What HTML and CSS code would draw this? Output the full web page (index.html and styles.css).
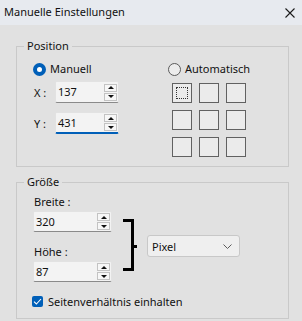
FILE: index.html
```html
<!DOCTYPE html>
<html lang="de">
  <head>
    <meta charset="UTF-8" />
    <meta name="viewport" content="width=device-width, initial-scale=1.0" />
    <title>Manuelle Einstellungen</title>
    <link rel="stylesheet" href="styles.css">
  </head>
  <body>
    <div class="titlebar">
      <span class="title">Manuelle Einstellungen</span>
      <svg class="close" width="10" height="10" viewBox="0 0 10 10">
        <path d="M0.5 0.5 L9.5 9.5 M9.5 0.5 L0.5 9.5" stroke="#1b1b1b" stroke-width="1.1" fill="none" />
      </svg>
    </div>

    <div class="content">
      <fieldset class="group">
        <legend>Position</legend>
        <div class="group-body position">
          <div class="pos-manual">
            <label class="radio"><span class="radio-dot checked"></span>Manuell</label>
            <div class="coord">
              <span class="coord-label">X :</span>
              <div class="spin">
                <span class="spin-value">137</span>
                <span class="spin-buttons">
                  <span class="spin-btn up"></span>
                  <span class="spin-btn down"></span>
                </span>
              </div>
            </div>
            <div class="coord coord-y">
              <span class="coord-label">Y :</span>
              <div class="spin focused">
                <span class="spin-value">431</span>
                <span class="spin-buttons">
                  <span class="spin-btn up"></span>
                  <span class="spin-btn down"></span>
                </span>
              </div>
            </div>
          </div>

          <div class="pos-auto">
            <label class="radio"><span class="radio-dot"></span>Automatisch</label>
            <div class="anchor-grid">
              <span class="anchor selected"></span>
              <span class="anchor"></span>
              <span class="anchor"></span>
              <span class="anchor"></span>
              <span class="anchor"></span>
              <span class="anchor"></span>
              <span class="anchor"></span>
              <span class="anchor"></span>
              <span class="anchor"></span>
            </div>
          </div>
        </div>
      </fieldset>

      <fieldset class="group group-size">
        <legend>Größe</legend>
        <div class="group-body">
          <div class="size-row">
            <div class="size-fields">
              <div class="field-label">Breite :</div>
              <div class="spin spin-size">
                <span class="spin-value">320</span>
                <span class="spin-buttons">
                  <span class="spin-btn up"></span>
                  <span class="spin-btn down"></span>
                </span>
              </div>
              <div class="field-label label-height">Höhe :</div>
              <div class="spin spin-size">
                <span class="spin-value">87</span>
                <span class="spin-buttons">
                  <span class="spin-btn up"></span>
                  <span class="spin-btn down"></span>
                </span>
              </div>
            </div>

            <svg class="bracket" width="16" height="54" viewBox="0 0 16 54">
              <path d="M1 2.5 H10.5 V51.5 H1 M10.5 28.5 H15" stroke="#000" stroke-width="3" fill="none" />
            </svg>

            <div class="select">
              <span>Pixel</span>
              <svg width="9" height="5" viewBox="0 0 9 5">
                <path d="M0.5 0.5 L4.5 4.5 L8.5 0.5" stroke="#5c5c5c" stroke-width="1" fill="none" />
              </svg>
            </div>
          </div>

          <label class="checkbox">
            <span class="check-box">
              <svg width="9" height="7" viewBox="0 0 9 7">
                <path d="M1 3.6 L3.4 6 L8 1" stroke="#fff" stroke-width="1.1" fill="none" />
              </svg>
            </span>
            Seitenverhältnis einhalten
          </label>
        </div>
      </fieldset>
    </div>
  </body>
</html>
```

FILE: styles.css
```css
body {
  margin: 0;
  width: 302px;
  height: 321px;
  overflow: hidden;
  background: #e1e1e1;
  font-family: "Noto Sans", "Open Sans", sans-serif;
  font-size: 11px;
  color: #111;
}
.titlebar {
  height: 25px;
  background: #e7eaef;
  display: flex;
  align-items: center;
  justify-content: space-between;
  padding: 0 7px 0 4px;
}
.title {
  font-size: 11px;
  line-height: 16px;
  margin-top: -1px;
}
.close {
  display: block;
  margin-top: 1px;
}
.content {
  padding: 13px 13px 0 16px;
}
.group {
  margin: 0;
  padding: 0;
  border: 1px solid #c9c9c9;
  min-width: 0;
}
.group legend {
  margin-left: 7px;
  padding: 0 3px;
  line-height: 16px;
}
.group-size {
  margin-top: 7px;
}
.group-body {
  padding: 7px 16px 9px 16px;
}

/* position */
.position {
  display: flex;
}
.pos-manual {
  width: 135px;
}
.radio {
  display: flex;
  align-items: center;
  height: 16px;
  line-height: 16px;
}
.radio-dot {
  width: 11px;
  height: 11px;
  border: 1px solid #5a5a5a;
  border-radius: 50%;
  background: #ececec;
  margin-right: 4px;
  box-sizing: content-box;
}
.radio-dot.checked {
  width: 5px;
  height: 5px;
  border: 4px solid #005fb8;
  background: #fff;
}
.coord {
  display: flex;
  align-items: center;
  margin-top: 4px;
}
.coord-y {
  margin-top: 9px;
}
.coord-label {
  width: 21px;
  padding-left: 1px;
}
.spin {
  width: 64px;
  height: 22px;
  box-sizing: border-box;
  background: #f3f3f3;
  border: 1px solid #e2e2e2;
  border-bottom-color: #8a8a8a;
  border-radius: 2px;
  display: flex;
  align-items: center;
  justify-content: space-between;
  padding: 0 1px 0 2px;
}
.spin.focused {
  border-bottom: 2px solid #005fb8;
}
.spin-value {
  line-height: 16px;
}
.spin-buttons {
  display: flex;
  flex-direction: column;
  gap: 1px;
}
.spin-btn {
  width: 13px;
  height: 8px;
  box-sizing: border-box;
  background: #f7f7f7;
  border: 1px solid #c3c3c3;
  display: flex;
  align-items: center;
  justify-content: center;
}
.spin-btn::after {
  content: "";
  border-left: 3px solid transparent;
  border-right: 3px solid transparent;
}
.spin-btn.up::after {
  border-bottom: 3px solid #111;
}
.spin-btn.down::after {
  border-top: 3px solid #111;
}
.anchor-grid {
  display: grid;
  grid-template-columns: repeat(3, 20px);
  grid-auto-rows: 20px;
  gap: 7px;
  margin: 6px 0 0 4px;
}
.anchor {
  border: 1px solid #616161;
  background: #ebebeb;
}
.anchor.selected {
  outline: 1px dotted #333;
  outline-offset: -5px;
}

/* size */
.group-size .group-body {
  padding-top: 4px;
}
.size-row {
  display: flex;
  align-items: flex-start;
}
.size-fields {
  width: 79px;
}
.field-label {
  line-height: 16px;
  padding-left: 1px;
}
.label-height {
  margin-top: 12px;
}
.spin-size {
  width: 79px;
  height: 21px;
  margin-top: 1px;
}
.bracket {
  display: block;
  margin: 24px 0 0 10px;
}
.select {
  width: 93px;
  height: 22px;
  box-sizing: border-box;
  margin: 41px 0 0 9px;
  background: #efefef;
  border: 1px solid #c8c8c8;
  border-radius: 3px;
  display: flex;
  align-items: center;
  justify-content: space-between;
  padding: 0 7px 0 4px;
}
.checkbox {
  display: flex;
  align-items: center;
  height: 16px;
  margin-top: 11px;
}
.check-box {
  width: 11px;
  height: 11px;
  background: #005fb8;
  border-radius: 2px;
  margin: 0 5px 0 -1px;
  display: flex;
  align-items: center;
  justify-content: center;
}
```
